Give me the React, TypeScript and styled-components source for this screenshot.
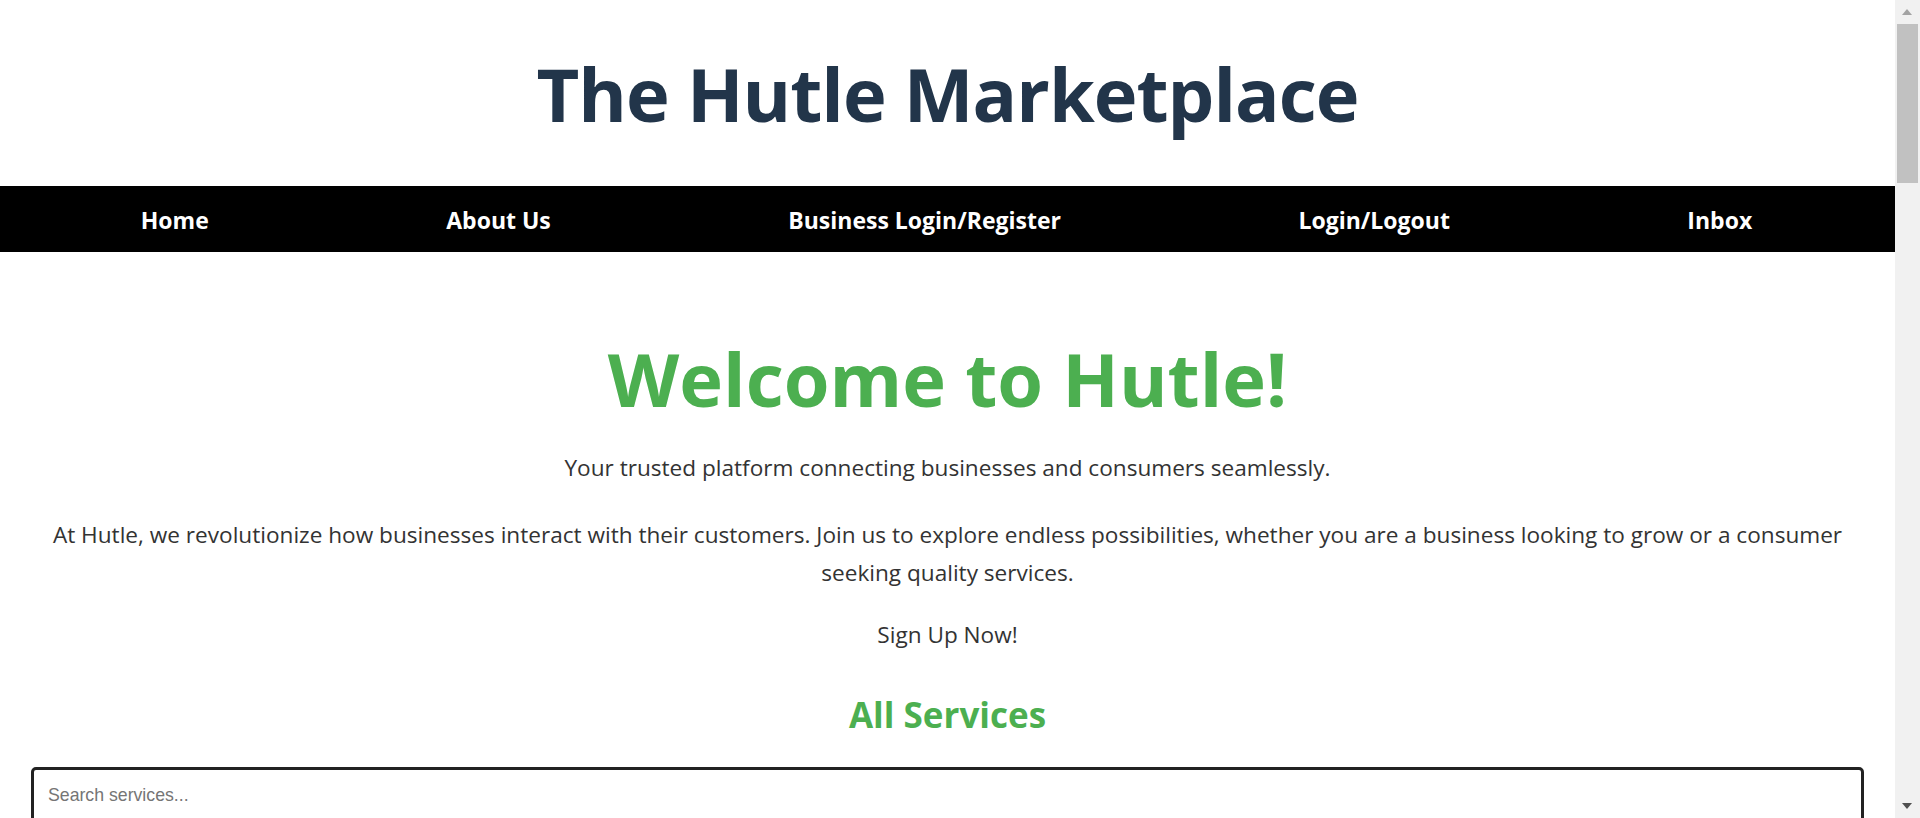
import React from "react";
import styled, { createGlobalStyle } from "styled-components";

const GlobalStyle = createGlobalStyle`
  html, body {
    margin: 0;
    padding: 0;
    background: #ffffff;
    scrollbar-width: none;
  }
  body {
    font-family: "Open Sans", "Noto Sans", sans-serif;
    color: #333333;
  }
`;

const Page = styled.div`
  min-height: 3960px;
  padding-right: 25px;
`;

const ScrollTrack = styled.div`
  position: fixed;
  top: 0;
  right: 0;
  width: 25px;
  height: 100vh;
  background: #f1f1f1;
`;

const ScrollThumb = styled.div`
  position: absolute;
  top: 24px;
  left: 2px;
  width: 21px;
  height: 159px;
  background: #c1c1c1;
`;

const ScrollArrow = styled.div<{ $dir: "up" | "down" }>`
  position: absolute;
  left: 7px;
  width: 0;
  height: 0;
  border-left: 5.5px solid transparent;
  border-right: 5.5px solid transparent;
  ${(p) =>
    p.$dir === "up"
      ? `top: 9px; border-bottom: 6px solid #a3a3a3;`
      : `bottom: 9px; border-top: 6px solid #505050;`}
`;

const Header = styled.header`
  padding: 50px 0 47px;
  text-align: center;
`;

const Title = styled.h1`
  margin: 0;
  font-size: 74px;
  line-height: 1.2;
  font-weight: 700;
  letter-spacing: -1px;
  color: #22354a;
`;

const Nav = styled.nav`
  background: #000000;
`;

const NavList = styled.ul`
  box-sizing: border-box;
  list-style: none;
  margin: 0;
  padding: 2px 24px 0 22px;
  height: 66px;
  display: flex;
  align-items: center;
  justify-content: space-around;
`;

const NavLink = styled.a`
  color: #ffffff;
  text-decoration: none;
  font-weight: 700;
  font-size: 23px;
  line-height: 30px;
`;

const Main = styled.main`
  padding: 83px 31px 0;
  text-align: center;
`;

const HeroTitle = styled.h2`
  margin: 0;
  font-size: 74px;
  line-height: 1.2;
  font-weight: 700;
  color: #4caf50;
`;

const Paragraph = styled.p<{ $top: number }>`
  margin: ${(p) => p.$top}px 0 0;
  font-size: 22.6px;
  line-height: 38px;
  color: #333333;
`;

const SectionTitle = styled.h3`
  margin: 40px 0 31px;
  font-size: 35px;
  line-height: 42px;
  font-weight: 700;
  color: #4caf50;
`;

const SearchInput = styled.input`
  display: block;
  box-sizing: border-box;
  width: 100%;
  margin: 0;
  padding: 15px 14px;
  border: 3px solid #222222;
  border-radius: 5px;
  font-family: "Liberation Sans", Arial, sans-serif;
  font-size: 17.7px;
  outline: none;
  &::placeholder {
    color: #757575;
  }
`;

const navItems = ["Home", "About Us", "Business Login/Register", "Login/Logout", "Inbox"];

export default function App() {
  return (
    <Page>
      <GlobalStyle />
      <Header>
        <Title>The Hutle Marketplace</Title>
      </Header>
      <Nav>
        <NavList>
          {navItems.map((item) => (
            <li key={item}>
              <NavLink href="#">{item}</NavLink>
            </li>
          ))}
        </NavList>
      </Nav>
      <Main>
        <HeroTitle>Welcome to Hutle!</HeroTitle>
        <Paragraph $top={25}>
          Your trusted platform connecting businesses and consumers seamlessly.
        </Paragraph>
        <Paragraph $top={29}>
          At Hutle, we revolutionize how businesses interact with their customers. Join us to explore endless
          possibilities, whether you are a business looking to grow or a consumer seeking quality services.
        </Paragraph>
        <Paragraph $top={24}>Sign Up Now!</Paragraph>
        <SectionTitle>All Services</SectionTitle>
        <SearchInput type="text" placeholder="Search services..." />
      </Main>
      <ScrollTrack aria-hidden="true">
        <ScrollArrow $dir="up" />
        <ScrollThumb />
        <ScrollArrow $dir="down" />
      </ScrollTrack>
    </Page>
  );
}
